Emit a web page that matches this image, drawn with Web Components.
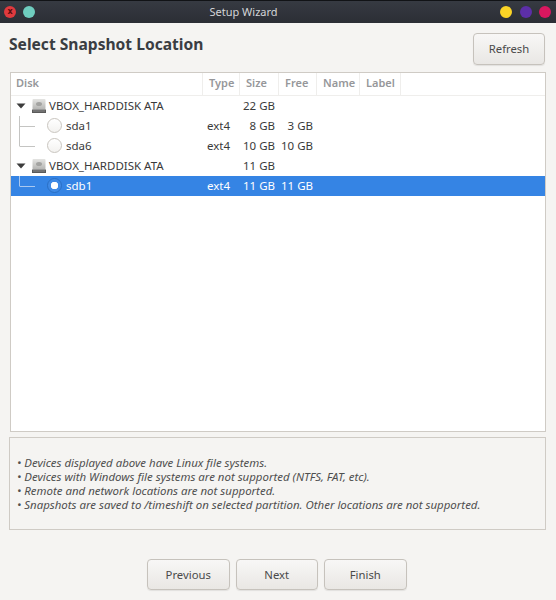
<!DOCTYPE html>
<html>
<head>
<meta charset="utf-8">
<title>Setup Wizard</title>
<style>
    html, body { margin: 0; padding: 0; background: #f5f4f2; }
    body { font-family: "Noto Sans", "Open Sans", sans-serif; font-size: 12px; color: #3c3c3c; }
</style>
</head>
<body>

<template id="disk-icon">
    <svg width="16" height="16" viewBox="0 0 16 16">
        <defs>
            <linearGradient id="d" x1="0" y1="0" x2="0" y2="1">
                <stop offset="0" stop-color="#e4e4e2"/>
                <stop offset="1" stop-color="#b4b4b2"/>
            </linearGradient>
        </defs>
        <rect x="1.5" y="1" width="13" height="10.5" rx="1" fill="url(#d)"/>
        <ellipse cx="8" cy="6" rx="3" ry="2" fill="#a3a3a1"/>
        <rect x="1" y="11.5" width="14" height="3.5" fill="#5a5a5a"/>
        <rect x="2" y="12.5" width="12" height="1" fill="#8a8a8a"/>
    </svg>
</template>

<script>
class WizardWindow extends HTMLElement {
    constructor() {
        super();
        this.attachShadow({mode: 'open'});
        this.shadowRoot.innerHTML = `
            <style>
                :host { display: flex; flex-direction: column; width: 556px; height: 600px; overflow: hidden; background: #f5f4f2; }
                #main { flex: 1; display: flex; flex-direction: column; min-height: 0; }
            </style>
            <wizard-titlebar></wizard-titlebar>
            <div id="main"><slot></slot></div>
        `;
    }
}

class WizardTitlebar extends HTMLElement {
    constructor() {
        super();
        this.attachShadow({mode: 'open'});
        this.shadowRoot.innerHTML = `
            <style>
                :host {
                    display: flex; align-items: center; justify-content: space-between;
                    height: 22px; padding: 0 5px 0 4px; position: relative;
                    border-top: 1px solid #111316;
                    background: linear-gradient(#363a42, #2b2e35);
                    color: #d3d5d8; font: 11px "Noto Sans", sans-serif;
                }
                #title { position: absolute; left: 0; right: 69px; top: 0; line-height: 22px; text-align: center; }
                .dots { display: flex; position: relative; }
                .dot { width: 12px; height: 12px; border-radius: 50%; display: block; }
                .close { background: #e03a3e; color: #5a0c0e; font: bold 8px/12px "DejaVu Sans", sans-serif; text-align: center; }
                .left { gap: 7px; }
                .right { gap: 7.5px; }
            </style>
            <div class="dots left">
                <span class="dot close">x</span>
                <span class="dot" style="background:#6fcdbf"></span>
            </div>
            <div id="title">Setup Wizard</div>
            <div class="dots right">
                <span class="dot" style="background:#fbd426"></span>
                <span class="dot" style="background:#5c2fa8"></span>
                <span class="dot" style="background:#d9175f"></span>
            </div>
        `;
    }
}

class WizardButton extends HTMLElement {
    constructor() {
        super();
        this.attachShadow({mode: 'open'});
        this.shadowRoot.innerHTML = `
            <style>
                :host {
                    display: flex; align-items: center; justify-content: center;
                    box-sizing: border-box; height: 31px; width: 82.5px;
                    border: 1px solid #c6c2bc; border-radius: 4px;
                    background: linear-gradient(#f8f7f6, #e9e7e4);
                    box-shadow: 0 1px 1px rgba(0,0,0,.08);
                    color: #4a4a4a; font: 11.3px "Noto Sans", sans-serif;
                }
            </style>
            <slot></slot>
        `;
    }
}

class DiskTree extends HTMLElement {
    constructor() {
        super();
        this.attachShadow({mode: 'open'});
        this.shadowRoot.innerHTML = `
            <style>
                :host {
                    display: block; box-sizing: border-box; height: 360px; margin: 0 10px 0 10px;
                    border: 1px solid #cfcbc5; background: #fff;
                }
                #head { display: grid; grid-template-columns: 192px 37px 39px 38px 43px 41px; height: 22px; border-bottom: 1px solid #efeeec; }
                #head span { box-sizing: border-box; border-right: 1px solid #efeeec; padding-left: 6px; line-height: 20px; color: #96979a; font-weight: 600; font-size: 11px; }
                #head span:first-child { padding-left: 5px; }
            </style>
            <div id="head">
                <span>Disk</span><span>Type</span><span>Size</span><span>Free</span><span>Name</span><span>Label</span>
            </div>
            <div id="rows"><slot></slot></div>
        `;
    }
}

class DiskRow extends HTMLElement {
    constructor() {
        super();
        this.attachShadow({mode: 'open'});
    }

    connectedCallback() {
        const kind = this.getAttribute('kind');
        const selected = this.hasAttribute('selected');
        let lead = '';
        if (kind === 'disk') {
            lead = `
                <svg class="arrow" width="10" height="6" viewBox="0 0 10 6"><path d="M0.5 0.5H9.5L5 5.5Z" fill="currentColor"/></svg>
                <span class="icon"></span>`;
        } else {
            // tree connector: 'mid' runs on below the branch, 'last' stops at it
            const down = kind === 'mid' ? 20 : 10;
            lead = `
                <svg class="line" width="20" height="20" viewBox="0 0 20 20"><path d="M0.5 0V${down}M0.5 10.5H16" stroke="${selected ? '#a9c8f0' : '#c4c4c2'}" fill="none"/></svg>
                <span class="radio"></span>`;
        }
        this.shadowRoot.innerHTML = `
            <style>
                :host {
                    display: grid; grid-template-columns: 192px 37px 39px 38px;
                    height: 20px; color: ${selected ? '#fff' : '#3a3a3a'};
                    background: ${selected ? '#3584e4' : 'transparent'}; font: 11.5px/19px "Noto Sans", sans-serif;
                }
                .name { display: flex; align-items: center; white-space: nowrap; height: 19px; }
                .arrow { margin-left: 5px; color: #3c3c3c; flex: none; }
                .icon { display: block; width: 16px; height: 16px; margin: 0 2px 0 5px; flex: none; }
                .line { margin-left: 8px; flex: none; margin-top: 1px; }
                .radio {
                    box-sizing: border-box; width: 15px; height: 15px; border-radius: 50%; margin: 0 4px 0 8px; flex: none;
                    border: 1px solid ${selected ? '#2a6fc4' : '#c9c5bf'};
                    background: ${selected ? 'radial-gradient(circle, #fff 0 3.5px, #3f8ae6 4px)' : 'linear-gradient(#fff, #f3f2f0)'};
                }
                .type { padding-left: 4px; }
                .num { text-align: right; padding-right: 4px; white-space: nowrap; }
            </style>
            <div class="name">${lead}<span>${this.getAttribute('name')}</span></div>
            <div class="type">${this.getAttribute('type') || ''}</div>
            <div class="num">${this.getAttribute('size') || ''}</div>
            <div class="num">${this.getAttribute('free') || ''}</div>
        `;
        const slot = this.shadowRoot.querySelector('.icon');
        if (slot) slot.appendChild(document.getElementById('disk-icon').content.cloneNode(true));
    }
}

class InfoBox extends HTMLElement {
    constructor() {
        super();
        this.attachShadow({mode: 'open'});
        this.shadowRoot.innerHTML = `
            <style>
                :host {
                    display: flex; flex-direction: column; justify-content: center;
                    box-sizing: border-box; height: 93px; margin: 5px 10px 0 9px; padding: 0 7px;
                    border: 1px solid #cfcbc5;
                    font: italic 11.45px/14px "Noto Sans", sans-serif; color: #4f4f4f;
                }
                ::slotted(div) { white-space: nowrap; }
            </style>
            <slot></slot>
        `;
    }
}

class WizardHeader extends HTMLElement {
    constructor() {
        super();
        this.attachShadow({mode: 'open'});
        this.shadowRoot.innerHTML = `
            <style>
                :host {
                    display: flex; align-items: center; justify-content: space-between;
                    height: 49px; padding: 0 11px 0 9px; box-sizing: border-box;
                }
                h1 { margin: 0; font: bold 15.6px "Noto Sans", sans-serif; color: #3a3d42; position: relative; top: -4px; }
                ::slotted(wizard-button) { width: 72px; height: 32px; position: relative; top: 1px; }
            </style>
            <h1>Select Snapshot Location</h1>
            <slot></slot>
        `;
    }
}

class WizardActions extends HTMLElement {
    constructor() {
        super();
        this.attachShadow({mode: 'open'});
        this.shadowRoot.innerHTML = `
            <style>
                :host { display: flex; gap: 6px; padding: 29px 0 0 147px; }
            </style>
            <slot></slot>
        `;
    }
}

window.customElements.define("wizard-titlebar", WizardTitlebar);
window.customElements.define("wizard-button", WizardButton);
window.customElements.define("disk-tree", DiskTree);
window.customElements.define("disk-row", DiskRow);
window.customElements.define("info-box", InfoBox);
window.customElements.define("wizard-header", WizardHeader);
window.customElements.define("wizard-actions", WizardActions);
window.customElements.define("wizard-window", WizardWindow);
</script>

<wizard-window>
    <wizard-header><wizard-button>Refresh</wizard-button></wizard-header>
    <disk-tree>
        <disk-row kind="disk" name="VBOX_HARDDISK ATA" size="22 GB"></disk-row>
        <disk-row kind="mid" name="sda1" type="ext4" size="8 GB" free="3 GB"></disk-row>
        <disk-row kind="last" name="sda6" type="ext4" size="10 GB" free="10 GB"></disk-row>
        <disk-row kind="disk" name="VBOX_HARDDISK ATA" size="11 GB"></disk-row>
        <disk-row kind="last" selected name="sdb1" type="ext4" size="11 GB" free="11 GB"></disk-row>
    </disk-tree>
    <info-box>
        <div>• Devices displayed above have Linux file systems.</div>
        <div>• Devices with Windows file systems are not supported (NTFS, FAT, etc).</div>
        <div>• Remote and network locations are not supported.</div>
        <div>• Snapshots are saved to /timeshift on selected partition. Other locations are not supported.</div>
    </info-box>
    <wizard-actions>
        <wizard-button>Previous</wizard-button>
        <wizard-button>Next</wizard-button>
        <wizard-button>Finish</wizard-button>
    </wizard-actions>
</wizard-window>
</body>
</html>
